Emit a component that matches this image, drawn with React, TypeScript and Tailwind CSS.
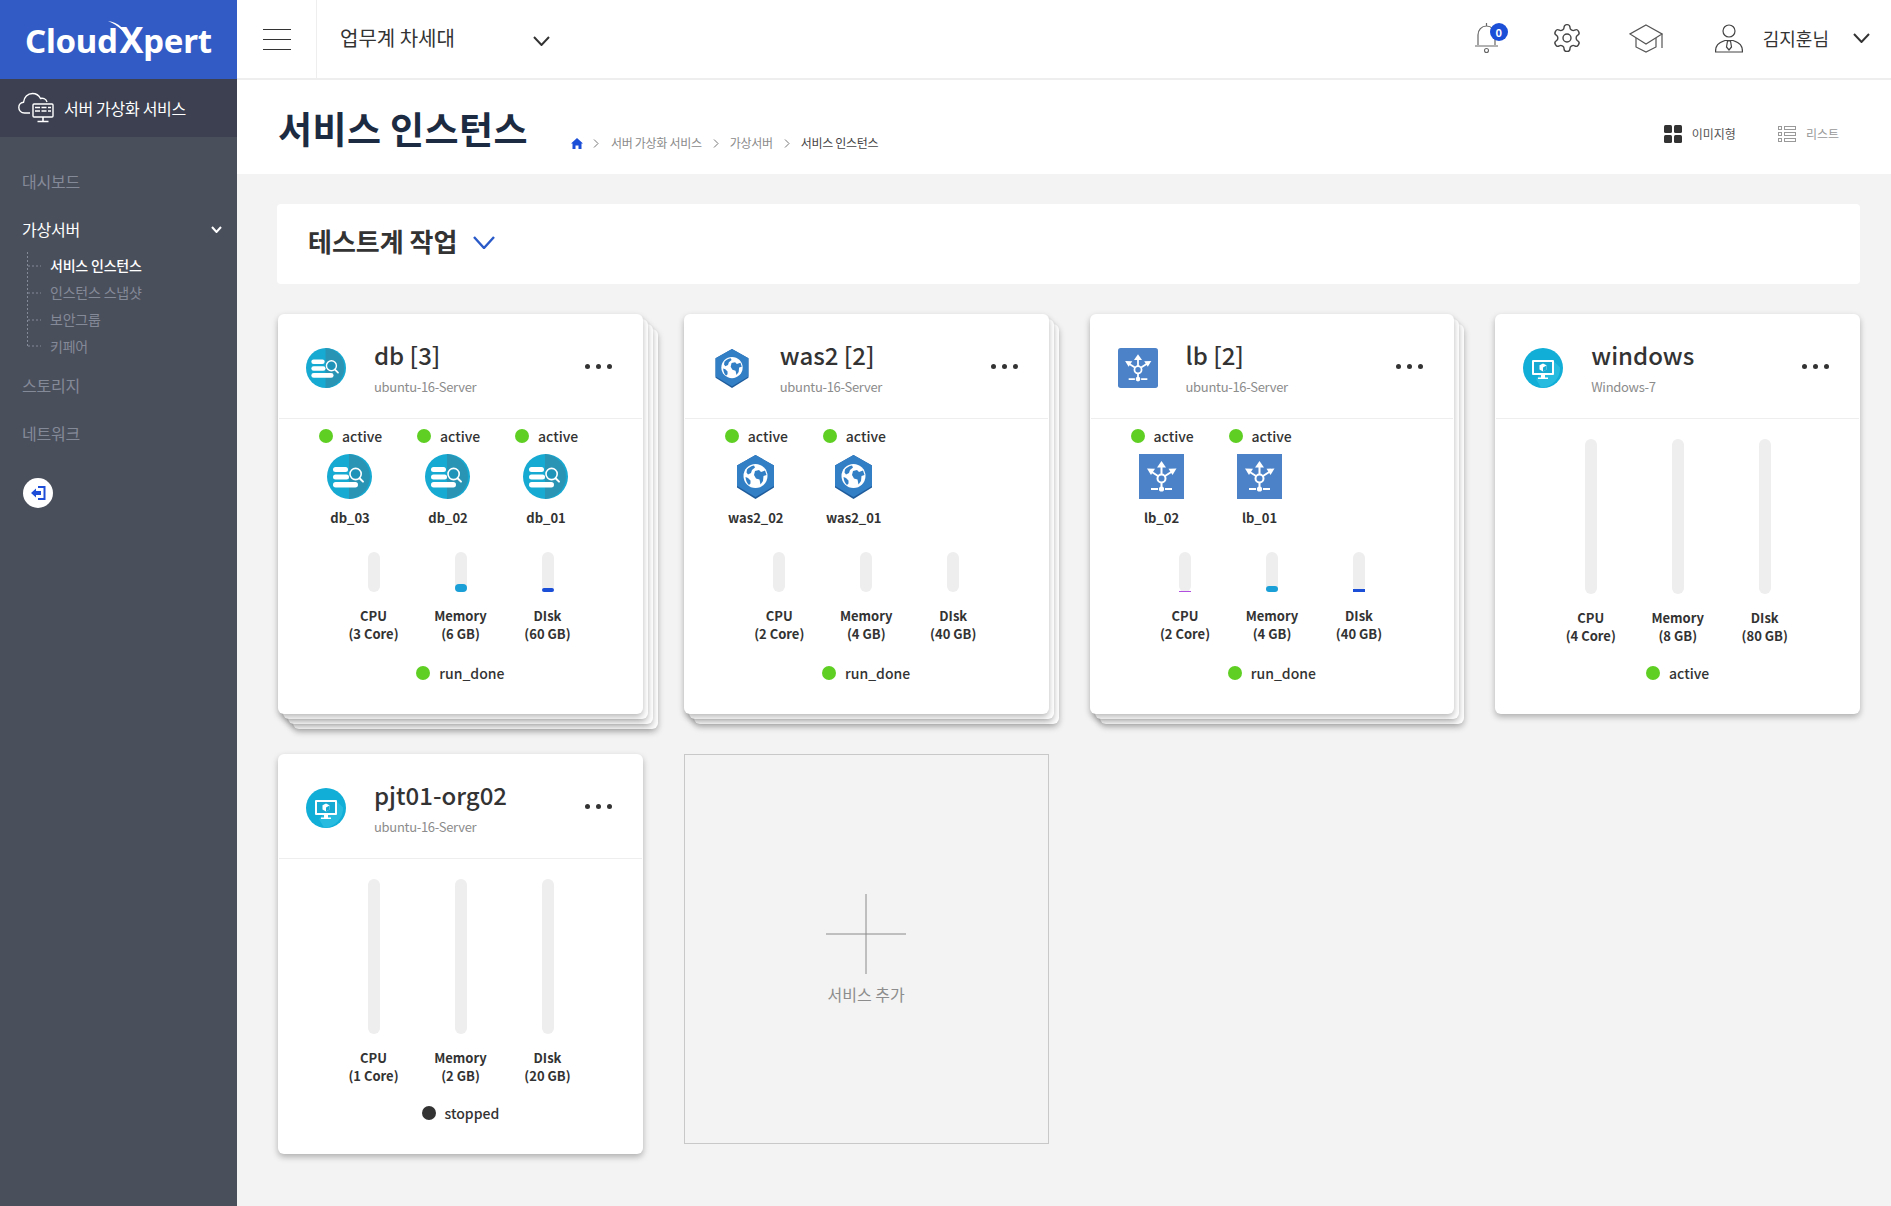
import React from "react";

const FONT = "font-['Noto_Sans_CJK_KR','Noto_Sans',sans-serif]";

function DbIcon({ size }: { size: number }) {
  return (
    <svg width={size} height={size} viewBox="0 0 45 45" className="block">
      <circle cx="22.5" cy="22.5" r="22.5" fill="#16a9d1" />
      <path d="M22 0.05A22.5 22.5 0 0 1 22 44.95Z" fill="#2a94b5" />
      <rect x="6" y="13" width="15" height="5" rx="2.5" fill="#fff" />
      <rect x="6" y="20.5" width="16" height="5" rx="2.5" fill="#fff" />
      <rect x="6" y="28" width="25" height="5.5" rx="2.7" fill="#fff" />
      <circle cx="28.6" cy="20" r="5.6" fill="#1f93b8" stroke="#fff" strokeWidth="1.6" />
      <path d="M32.6 24.2L36 27.6" stroke="#fff" strokeWidth="2" strokeLinecap="round" />
    </svg>
  );
}

function HexIcon({ size }: { size: number }) {
  return (
    <svg width={size} height={size} viewBox="0 0 45 45" className="block">
      <path d="M22.5 1L41 11.5V33.5L22.5 45L4 33.5V11.5Z" fill="#1f5c9c" />
      <path d="M22.5 1L41 11.5V32L22.5 43L4 32V11.5Z" fill="#327fc6" />
      <circle cx="22.5" cy="22" r="12" fill="#fff" />
      <path d="M14 15.5c2-2 4-3.5 7-4l1 2-3 2.5-1 3-3 1.5-1.5-2zM22 17l4-1 2 2 4-1.5 1.5 4.5-3 1-.5 5-2.5 3.5-1-5-3.5-1-2-3.5zM12.5 23l2.5 1 2.5 2.5v3l-1.5 1.5c-2-1.5-3.2-4.500-3.500-8z" fill="#327fc6" />
    </svg>
  );
}

function LbIcon({ size, rounded }: { size: number; rounded?: boolean }) {
  return (
    <svg width={size} height={size} viewBox="0 0 45 45" className="block">
      <rect x="0" y="0" width="45" height="45" rx={rounded ? 3 : 0} fill="#4c83c8" />
      <g stroke="#fff" strokeWidth="2" fill="none">
        <circle cx="22.5" cy="24.5" r="4" />
        <path d="M22.500 20.500V12M19 22L12 17.500M26 22L33 17.500M22.500 28.500V34" />
        <path d="M12 35H19M26 35H33" />
      </g>
      <path d="M22.500 7L27 13.500H18Z" fill="#fff" />
      <path d="M8 14.500L16 14.800L12 21Z" fill="#fff" />
      <path d="M37.500 14.500L29.500 14.800L33.500 21Z" fill="#fff" />
      <circle cx="22.500" cy="35" r="2.600" fill="#fff" />
    </svg>
  );
}

function VmIcon({ size }: { size: number }) {
  return (
    <svg width={size} height={size} viewBox="0 0 40 40" className="block">
      <circle cx="20" cy="20" r="20" fill="#11aed7" />
      <path d="M30 12.500L37 19.500A19 19 0 0 1 18 39.500L13 31Z" fill="#28bbe0" />
      <rect x="9" y="12" width="22" height="15" rx="1" fill="#fff" />
      <rect x="11" y="14" width="18" height="11" fill="#18a9d2" />
      <path d="M20 15.500L23.500 17.200V21.500L20 23.500L16.500 21.500V17.200Z" fill="#fff" />
      <path d="M20 19.500V23.500L23.500 21.500V17.500Z" fill="#18a9d2" />
      <path d="M18 27H22V29.500H25V31H15V29.500H18Z" fill="#fff" />
    </svg>
  );
}

function Bar({ height, fill, fillH, fillRound }: { height: string; fill?: string; fillH?: number; fillRound?: string }) {
  return (
    <div className={`w-[12px] ${height} rounded-[6px] bg-[#eeeeee] flex flex-col justify-end`}>
      {fill ? <div className={fillRound} style={{ height: fillH, background: fill }} /> : null}
    </div>
  );
}

type Usage = { cpu: string; mem: string; disk: string; bars?: [string?, number?, string?][] };

function Usage({ u, tall }: { u: Usage; tall?: boolean }) {
  const cols: [string, string][] = [["CPU", u.cpu], ["Memory", u.mem], ["DIsk", u.disk]];
  return (
    <div className="flex pl-[52px]">
      {cols.map(([a, b], i) => {
        const bar = u.bars?.[i];
        return (
          <div key={a} className="w-[87px] flex flex-col items-center">
            <Bar
              height={tall ? "h-[155px]" : "h-[40px]"}
              fill={bar?.[0]}
              fillH={bar?.[1]}
              fillRound={bar?.[2]}
            />
            <div className="mt-[15px] text-[13px] leading-[18px] font-semibold text-[#333] text-center whitespace-nowrap">
              {a}
              <br />
              {b}
            </div>
          </div>
        );
      })}
    </div>
  );
}

function Dot({ dark }: { dark?: boolean }) {
  return <span className={`block w-[14px] h-[14px] rounded-full shrink-0 ${dark ? "bg-[#333333]" : "bg-[#5fcf24]"}`} />;
}

type CardProps = {
  title: string;
  sub: string;
  icon: React.ReactNode;
  small?: React.ReactNode;
  items?: string[];
  layers?: number;
  usage: Usage;
  status: string;
  dark?: boolean;
};

function Card({ title, sub, icon, small, items, layers = 0, usage, status, dark }: CardProps) {
  const layerClasses = ["left-[15px] top-[15px]", "left-[10px] top-[10px]", "left-[5px] top-[5px]"].slice(3 - layers);
  return (
    <div className="relative h-[400px]">
      {layerClasses.map((c) => (
        <div key={c} className={`absolute ${c} w-full h-[400px] bg-white rounded-[6px] shadow-[0_3px_6px_rgba(0,0,0,0.28)]`} />
      ))}
      <div className="relative h-[400px] bg-white rounded-[6px] shadow-[0_3px_6px_rgba(0,0,0,0.28)]">
        <div className="h-[105px] mx-[1px] border-b border-[#eeeeee] flex pl-[27px]">
          <div className="w-[40px] h-[40px] mt-[34px] flex items-center justify-center shrink-0">{icon}</div>
          <div className="ml-[28px] pt-[23px]">
            <div className="text-[24px] leading-[36px] font-medium text-[#333] whitespace-nowrap">{title}</div>
            <div className="text-[13px] leading-[20px] mt-[4px] tracking-[-0.3px] text-[#8c8c8c] whitespace-nowrap">{sub}</div>
          </div>
          <div className="ml-auto mr-[30px] mt-[50px] flex gap-[6px] h-[5px]">
            <span className="w-[5px] h-[5px] rounded-full bg-[#333]" />
            <span className="w-[5px] h-[5px] rounded-full bg-[#333]" />
            <span className="w-[5px] h-[5px] rounded-full bg-[#333]" />
          </div>
        </div>
        {items ? (
          <>
            <div className="flex pl-[41px] pt-[7px]">
              {items.map((n) => (
                <div key={n} className="w-[98px]">
                  <div className="flex items-center h-[20px] gap-[9px]">
                    <Dot />
                    <span className="text-[14px] font-medium text-[#333]">active</span>
                  </div>
                  <div className="mt-[8px] ml-[8px] w-[45px] h-[45px] flex justify-center">{small}</div>
                  <div className="mt-[9px] w-[62px] text-center text-[13px] leading-[20px] font-semibold text-[#333] whitespace-nowrap">{n}</div>
                </div>
              ))}
            </div>
            <div className="mt-[24px]">
              <Usage u={usage} />
            </div>
            <div className="mt-[20px] h-[20px] flex items-center justify-center gap-[9px]">
              <Dot />
              <span className="text-[14px] font-medium text-[#333]">{status}</span>
            </div>
          </>
        ) : (
          <>
            <div className="pt-[20px]">
              <Usage u={usage} tall />
            </div>
            <div className="mt-[18px] h-[20px] flex items-center justify-center gap-[9px]">
              <Dot dark={dark} />
              <span className="text-[14px] font-medium text-[#333]">{status}</span>
            </div>
          </>
        )}
      </div>
    </div>
  );
}

function Chevron({ className, w = 16, h = 9, color = "#333", sw = 2 }: { className?: string; w?: number; h?: number; color?: string; sw?: number }) {
  return (
    <svg width={w} height={h} viewBox={`0 0 ${w} ${h}`} className={className}>
      <path d={`M1 1L${w / 2} ${h - 1}L${w - 1} 1`} fill="none" stroke={color} strokeWidth={sw} />
    </svg>
  );
}

function Crumb() {
  return (
    <svg width="6" height="9" viewBox="0 0 6 9" className="shrink-0 block">
      <path d="M1 .5L5 4.500L1 8.500" fill="none" stroke="#777" strokeWidth="1" />
    </svg>
  );
}

export default function App() {
  return (
    <div className={`${FONT} flex w-full h-[1206px] overflow-hidden bg-[#f3f3f3] text-[#333]`}>
      <aside className="w-[237px] shrink-0 bg-[#4a4f5c] flex flex-col">
        <div className="relative h-[79px] bg-[#325bc6] flex items-center pl-[25px]">
          <span className="font-['Noto_Sans',sans-serif] text-[33px] font-bold text-white leading-none tracking-[-0.3px] whitespace-nowrap">
            Cloud<span className="ml-[2px] text-[36px]">X</span>pert
          </span>
          <svg width="30" height="32" viewBox="0 0 30 32" className="absolute left-[108px] top-[21px]">
            <path d="M0 0C10 1 18 9 24 20C19 13 10 4 0 0Z" fill="#fff" />
          </svg>
        </div>
        <div className="h-[58px] bg-[#3c4050] flex items-center pl-[18px]">
          <svg width="36" height="32" viewBox="0 0 36 32" className="shrink-0">
            <path d="M12 21H6.500C3 21 .8 18.500 .8 15.500C.8 12.500 3 10.500 5.500 10.300C6 5.500 9.500 1.500 14.500 1.500C18 1.500 21 3.500 22.500 6.500C24.500 6 28 6.500 29 10" fill="none" stroke="#fff" strokeWidth="1.400" />
            <rect x="15" y="12" width="20" height="13" rx="1" fill="#3c4050" stroke="#fff" strokeWidth="1.400" />
            <path d="M17 15.500H33M17 19H33" stroke="#fff" strokeWidth="1.400" strokeDasharray="5 1.500" />
            <path d="M25 25V29M19.500 29.500H30.500" stroke="#fff" strokeWidth="1.600" />
          </svg>
          <span className="ml-[10px] text-[16px] tracking-[-0.3px] text-white whitespace-nowrap">서버 가상화 서비스</span>
        </div>
        <div className="pl-[22px] pt-[32px] pr-[15px]">
          <div className="h-[24px] leading-[24px] text-[16px] tracking-[-0.2px] text-[#858a98]">대시보드</div>
          <div className="mt-[24px] h-[24px] flex items-center justify-between">
            <span className="text-[16px] tracking-[-0.2px] text-white">가상서버</span>
            <Chevron w={11} h={7} color="#fff" />
          </div>
          <div className="relative mt-[11px] pl-[28px] h-[108px] text-[14px] tracking-[-0.2px]">
            <svg width="16" height="96" viewBox="0 0 16 96" className="absolute left-[5px] top-[0px]">
              <path d="M.5 0V94M1 14H14M1 41H14M1 68H14M1 94H14" stroke="#858a98" strokeWidth="1" strokeDasharray="2 2" fill="none" />
            </svg>
            <div className="h-[27px] leading-[27px] text-white font-medium">서비스 인스턴스</div>
            <div className="h-[27px] leading-[27px] text-[#858a98]">인스턴스 스냅샷</div>
            <div className="h-[27px] leading-[27px] text-[#858a98]">보안그룹</div>
            <div className="h-[27px] leading-[27px] text-[#858a98]">키페어</div>
          </div>
          <div className="mt-[13px] h-[24px] leading-[24px] text-[16px] tracking-[-0.2px] text-[#858a98]">스토리지</div>
          <div className="mt-[24px] h-[24px] leading-[24px] text-[16px] tracking-[-0.2px] text-[#858a98]">네트워크</div>
          <div className="mt-[33px] ml-[1px] w-[30px] h-[30px] rounded-full bg-white flex items-center justify-center">
            <svg width="16" height="16" viewBox="0 0 16 16">
              <path d="M8 2H14.500V14H8" fill="none" stroke="#1f4fd8" strokeWidth="2" />
              <path d="M1 8L6 3.500V6H11V10H6V12.500Z" fill="#1f4fd8" />
            </svg>
          </div>
        </div>
      </aside>

      <main className="flex-1 min-w-0 flex flex-col">
        <header className="h-[80px] bg-white border-b-2 border-[#eeeeee] flex items-stretch">
          <div className="w-[80px] border-r border-[#eeeeee] flex flex-col justify-center gap-[9px] pl-[26px]">
            <span className="block w-[28px] h-px bg-[#333]" />
            <span className="block w-[28px] h-px bg-[#333]" />
            <span className="block w-[28px] h-px bg-[#333]" />
          </div>
          <div className="w-[240px] pl-[23px] flex items-center">
            <span className="text-[20px] text-[#333] whitespace-nowrap -mt-[3px]">업무계 차세대</span>
            <Chevron w={17} h={10} className="ml-[78px] mt-[3px]" />
          </div>
          <div className="ml-auto flex items-center pr-[21px]">
            <div className="relative w-[24px] h-[30px] -mt-[2px]">
              <svg width="24" height="31" viewBox="0 0 24 31">
                <path d="M3 22V12C3 7 6.500 3 11.500 3C16.500 3 20 7 20 12V22M0 23H23M11.500 3V0" fill="none" stroke="#666" strokeWidth="1.200" />
                <circle cx="11.500" cy="27.500" r="2" fill="none" stroke="#666" strokeWidth="1.100" />
              </svg>
              <span className="absolute left-[15px] top-0 w-[18px] h-[18px] rounded-full bg-[#1c4fd8] text-white text-[11px] font-bold leading-[18px] text-center">0</span>
            </div>
            <svg width="32" height="32" viewBox="0 0 24 24" className="ml-[52px] -mt-[2px]" fill="none" stroke="#444" strokeWidth="1.050" strokeLinejoin="round">
              <path d="M12.220 2h-.44a2 2 0 0 0-2 2v.18a2 2 0 0 1-1 1.730l-.43.250a2 2 0 0 1-2 0l-.150-.080a2 2 0 0 0-2.730.730l-.220.380a2 2 0 0 0 .730 2.730l.150.100a2 2 0 0 1 1 1.720v.510a2 2 0 0 1-1 1.740l-.150.090a2 2 0 0 0-.730 2.730l.220.380a2 2 0 0 0 2.730.730l.150-.080a2 2 0 0 1 2 0l.430.250a2 2 0 0 1 1 1.730V20a2 2 0 0 0 2 2h.44a2 2 0 0 0 2-2v-.18a2 2 0 0 1 1-1.730l.430-.250a2 2 0 0 1 2 0l.150.080a2 2 0 0 0 2.730-.730l.220-.390a2 2 0 0 0-.730-2.730l-.150-.080a2 2 0 0 1-1-1.740v-.500a2 2 0 0 1 1-1.740l.150-.090a2 2 0 0 0 .730-2.730l-.220-.380a2 2 0 0 0-2.730-.730l-.150.080a2 2 0 0 1-2 0l-.430-.250a2 2 0 0 1-1-1.730V4a2 2 0 0 0-2-2z" />
              <circle cx="12" cy="12" r="3" />
            </svg>
            <svg width="34" height="29" viewBox="0 0 34 29" className="ml-[46px] -mt-[2px]" fill="none" stroke="#555" strokeWidth="1.200">
              <path d="M17 1L33 10L17 20L1 10Z" />
              <path d="M7 14V23L17 28L27 23V14M33 10V24" />
            </svg>
            <svg width="28" height="29" viewBox="0 0 28 29" className="ml-[52px] -mt-[2px]" fill="none" stroke="#444" strokeWidth="1.200">
              <circle cx="14" cy="7" r="6" />
              <path d="M.500 28C.500 21 3 19 10 16.500H18C25 19 27.500 21 27.500 28H.500Z" />
              <path d="M12.500 17H15.500L16.500 23L14 26L11.500 23Z" />
            </svg>
            <span className="ml-[20px] text-[18px] text-[#333] whitespace-nowrap -mt-[2px]">김지훈님</span>
            <Chevron w={17} h={10} className="ml-[24px] -mt-[3px]" />
          </div>
        </header>

        <div className="h-[94px] bg-white flex items-start pl-[41px] pr-[52px]">
          <div className="w-[293px] shrink-0">
            <h1 className="text-[37px] leading-[52px] font-bold text-[#1c2b42] whitespace-nowrap mt-[22px] tracking-[0.4px]">서비스 인스턴스</h1>
          </div>
          <nav className="mt-[54px] flex items-center text-[12px] leading-[18px] tracking-[-0.3px] text-[#8a8a8a] whitespace-nowrap">
            <svg width="12" height="11" viewBox="0 0 12 11" className="block">
              <path d="M6 0L12 5.500H10.500V11H7.500V7.500H4.500V11H1.500V5.500H0Z" fill="#1c4fd8" />
            </svg>
            <span className="ml-[10px]"><Crumb /></span>
            <span className="ml-[12px]">서버 가상화 서비스</span>
            <span className="ml-[11px]"><Crumb /></span>
            <span className="ml-[11px]">가상서버</span>
            <span className="ml-[11px]"><Crumb /></span>
            <span className="ml-[11px] text-[#444]">서비스 인스턴스</span>
          </nav>
          <div className="ml-auto mt-[45px] flex items-center h-[18px] text-[12px] whitespace-nowrap">
            <svg width="18" height="18" viewBox="0 0 18 18">
              <rect x="0" y="0" width="8" height="8" rx="1.500" fill="#333" />
              <rect x="10" y="0" width="8" height="8" rx="1.500" fill="#333" />
              <rect x="0" y="10" width="8" height="8" rx="1.500" fill="#333" />
              <rect x="10" y="10" width="8" height="8" rx="1.500" fill="#333" />
            </svg>
            <span className="ml-[10px] text-[#555]">이미지형</span>
            <svg width="18" height="16" viewBox="0 0 18 16" className="ml-[42px]" fill="none" stroke="#999">
              <rect x=".5" y=".5" width="3" height="3" />
              <rect x=".5" y="6.500" width="3" height="3" />
              <rect x=".5" y="12.500" width="3" height="3" />
              <rect x="6.500" y=".5" width="11" height="3" />
              <rect x="6.500" y="6.500" width="11" height="3" />
              <rect x="6.500" y="12.500" width="11" height="3" />
            </svg>
            <span className="ml-[10px] text-[#999]">리스트</span>
          </div>
        </div>

        <div className="pl-[40px] pr-[31px] pt-[30px]">
          <div className="h-[80px] bg-white rounded-[4px] flex items-center pl-[31px]">
            <span className="text-[26px] font-bold text-[#333] whitespace-nowrap -mt-[8px]">테스트계 작업</span>
            <Chevron w={22} h={13} color="#2a5ac8" className="ml-[16px] -mt-[4px]" sw={2.4} />
          </div>
          <div className="mt-[30px] pl-[1px] grid grid-cols-[repeat(4,364.75px)] gap-x-[41px] gap-y-[40px]">
            <Card
              title="db [3]"
              sub="ubuntu-16-Server"
              icon={<DbIcon size={40} />}
              small={<DbIcon size={45} />}
              items={["db_03", "db_02", "db_01"]}
              layers={3}
              usage={{ cpu: "(3 Core)", mem: "(6 GB)", disk: "(60 GB)", bars: [[], ["#1a9fd6", 8, "rounded-[6px]"], ["#1c4fd8", 4, "rounded-[2px]"]] }}
              status="run_done"
            />
            <Card
              title="was2 [2]"
              sub="ubuntu-16-Server"
              icon={<HexIcon size={40} />}
              small={<HexIcon size={45} />}
              items={["was2_02", "was2_01"]}
              layers={2}
              usage={{ cpu: "(2 Core)", mem: "(4 GB)", disk: "(40 GB)" }}
              status="run_done"
            />
            <Card
              title="lb [2]"
              sub="ubuntu-16-Server"
              icon={<LbIcon size={40} rounded />}
              small={<LbIcon size={45} />}
              items={["lb_02", "lb_01"]}
              layers={2}
              usage={{ cpu: "(2 Core)", mem: "(4 GB)", disk: "(40 GB)", bars: [["#b14ee0", 1, ""], ["#1a9fd6", 6, "rounded-[4px]"], ["#1c4fd8", 3, ""]] }}
              status="run_done"
            />
            <Card
              title="windows"
              sub="Windows-7"
              icon={<VmIcon size={40} />}
              usage={{ cpu: "(4 Core)", mem: "(8 GB)", disk: "(80 GB)" }}
              status="active"
            />
            <Card
              title="pjt01-org02"
              sub="ubuntu-16-Server"
              icon={<VmIcon size={40} />}
              usage={{ cpu: "(1 Core)", mem: "(2 GB)", disk: "(20 GB)" }}
              status="stopped"
              dark
            />
            <div className="h-[390px] border border-[#c8c8c8] flex flex-col items-center pt-[139px]">
              <svg width="80" height="80" viewBox="0 0 80 80" className="block">
                <path d="M40 0V80M0 40H80" stroke="#8a8a8a" strokeWidth="1" />
              </svg>
              <span className="mt-[8px] text-[16px] text-[#8c8c8c] whitespace-nowrap">서비스 추가</span>
            </div>
          </div>
        </div>
      </main>
    </div>
  );
}
